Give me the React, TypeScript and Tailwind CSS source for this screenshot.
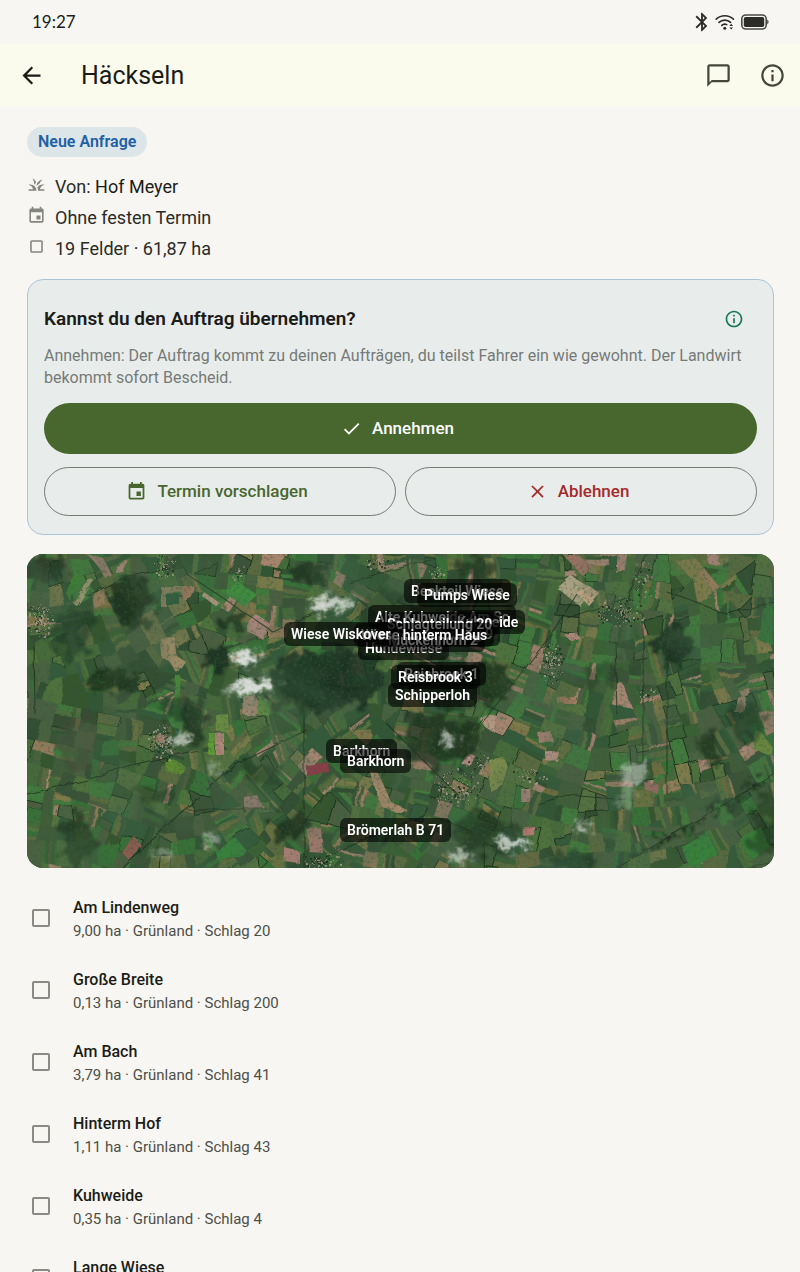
import React, { useId } from 'react';
import {
  MdArrowBack,
  MdBluetooth,
  MdChatBubbleOutline,
  MdCheck,
  MdClose,
  MdCropSquare,
  MdEvent,
  MdInfoOutline,
  MdOutlineGrass,
} from 'react-icons/md';

type Point = [number, number];

const MAP_W = 747;
const MAP_H = 314;

const fields = [
  { name: 'Am Lindenweg', detail: '9,00 ha · Grünland · Schlag 20' },
  { name: 'Große Breite', detail: '0,13 ha · Grünland · Schlag 200' },
  { name: 'Am Bach', detail: '3,79 ha · Grünland · Schlag 41' },
  { name: 'Hinterm Hof', detail: '1,11 ha · Grünland · Schlag 43' },
  { name: 'Kuhweide', detail: '0,35 ha · Grünland · Schlag 4' },
  { name: 'Lange Wiese' },
];

// x / y of the label box on the map, later entries lie on top
const mapLabels = [
  { text: 'Beekteil Wiese', x: 377, y: 25 },
  { text: 'Pumps Wiese', x: 390, y: 29 },
  { text: 'Alte Kuhweide Am Sc', x: 341, y: 51 },
  { text: 'Kuhweide', x: 423, y: 56 },
  { text: 'Schlagteilung 9', x: 362, y: 68 },
  { text: 'Hundewiese', x: 331, y: 82 },
  { text: 'Mückenhorn 2', x: 354, y: 74 },
  { text: 'Schlagteilung 20', x: 353, y: 58 },
  { text: 'Wiese hinterm Haus', x: 327, y: 69 },
  { text: 'Wiese Wiskover', x: 257, y: 68 },
  { text: 'Reisbrook 1', x: 370, y: 108 },
  { text: 'Reisbrook 3', x: 364, y: 111 },
  { text: 'Schipperloh', x: 361, y: 129 },
  { text: 'Barkhorn', x: 299, y: 185 },
  { text: 'Barkhorn', x: 313, y: 195 },
  { text: 'Brömerlah B 71', x: 313, y: 264 },
];

// cx, cy, rx, ry, opacity
const woods = [
  [300, 122, 56, 30, 0.85],
  [270, 138, 30, 16, 0.6],
  [104, 46, 20, 26, 0.75],
  [43, 76, 20, 26, 0.5],
  [191, 102, 16, 9, 0.85],
  [84, 126, 22, 14, 0.8],
  [165, 168, 12, 22, 0.7],
  [14, 12, 22, 14, 0.6],
  [48, 284, 16, 26, 0.65],
  [262, 270, 20, 13, 0.75],
  [282, 16, 20, 14, 0.7],
  [205, 66, 12, 10, 0.8],
  [150, 150, 12, 12, 0.5],
  [130, 240, 22, 10, 0.4],
  [235, 218, 20, 10, 0.4],
  [643, 89, 18, 20, 0.85],
  [432, 128, 54, 25, 0.8],
  [410, 184, 42, 26, 0.75],
  [455, 276, 32, 22, 0.65],
  [446, 14, 18, 13, 0.6],
  [716, 168, 17, 24, 0.5],
  [682, 192, 9, 17, 0.6],
  [380, 60, 50, 30, 0.35],
  [735, 270, 10, 36, 0.45],
  [540, 306, 20, 10, 0.5],
  [575, 118, 16, 11, 0.35],
];

const clouds = [
  [303, 49, 22, 7, 0.8],
  [292, 54, 10, 6, 0.7],
  [218, 103, 14, 7, 0.95],
  [228, 133, 22, 7, 0.95],
  [208, 137, 10, 4, 0.6],
  [153, 186, 11, 6, 0.7],
  [184, 285, 9, 6, 0.45],
  [422, 186, 9, 5, 0.7],
  [606, 219, 12, 10, 0.5],
  [600, 240, 9, 16, 0.25],
  [486, 290, 17, 6, 0.8],
  [432, 303, 12, 6, 0.65],
  [556, 274, 8, 6, 0.6],
  [334, 201, 10, 3, 0.5],
  [186, 214, 5, 8, 0.35],
  [138, 300, 12, 6, 0.3],
];

// cx, cy, rx, ry, number of roofs
const villages = [
  [12, 66, 14, 18, 130],
  [134, 190, 15, 20, 150],
  [137, 11, 12, 12, 70],
  [294, 307, 22, 8, 90],
  [594, 58, 25, 16, 150],
  [617, 24, 10, 22, 50],
  [524, 108, 13, 22, 130],
  [428, 234, 24, 20, 170],
  [452, 210, 14, 12, 50],
  [352, 8, 14, 8, 40],
  [410, 20, 10, 10, 40],
  [210, 18, 8, 10, 30],
  [620, 140, 12, 6, 30],
  [500, 222, 20, 8, 50],
];

const accents: { d: string; fill: string }[] = [
  { d: 'M529 33l14-12 25 15-14 17z', fill: '#a8a080' },
  { d: 'M550 39l12-7 11 8-11 12z', fill: '#d9b08d' },
  { d: 'M280 212l21-3 1 9-22 4z', fill: '#8d3d46' },
  { d: 'M454 166q5-8 16-4l-5 15q-8-3-11-11z', fill: '#b79683' },
  { d: 'M133 84l15-1 1 18 9 6-8 12-8-12-8-4z', fill: '#a38d68' },
  { d: 'M220 71l10-10 15 10-10 14-15-8z', fill: '#a9857a' },
  { d: 'M134 33l32 0 0 5-26 1 0 14-6 0z', fill: '#a58b6b' },
  { d: 'M139 40l14 0 0 11-14 0z', fill: '#2c5a38' },
  { d: 'M155 35l12-4-4 10-7 6z', fill: '#b57f63' },
  { d: 'M177 38l18 13-4 3-16-12z', fill: '#b39a82' },
  { d: 'M195 55l10-13 5 4-8 12z', fill: '#b08c75' },
  { d: 'M237 0l24 0-10 15-18-4z', fill: '#a6836c' },
  { d: 'M60 0l16 4 8 16-6 4q-4-10-18-24z', fill: '#9a7c6e' },
  { d: 'M89 12l12-6-6 11-7 1z', fill: '#ac8578' },
  { d: 'M47 50l16-26 4 3-17 25z', fill: '#a39d75' },
  { d: 'M39 39l8-18 8 3-12 23z', fill: '#3e7e35' },
  { d: 'M189 161l12-1 1 18-12 0z', fill: '#6d8e43' },
  { d: 'M189 180l8-1 0 22-8 0z', fill: '#b18778' },
  { d: 'M182 180l7 0-1 21-7 0z', fill: '#629b34' },
  { d: 'M138 206q12-2 22 9l-5 5-16-3z', fill: '#5d8a33' },
  { d: 'M188 297l20-14 12 14-6 7-24 1z', fill: '#37843a' },
  { d: 'M103 307l-9-10 14-14 7 9z', fill: '#8c5c50' },
  { d: 'M218 244l12-3 8 14-20 1z', fill: '#a78078' },
  { d: 'M280 275l14-1 2 25-14-1z', fill: '#99776b' },
  { d: 'M257 293l16 4 0 13-16-2z', fill: '#a37c71' },
  { d: 'M343 217l9 3 12 28 16 8-8 4-18-8-8-22z', fill: '#a8896a' },
  { d: 'M216 143l12-2 7 12-8 8-10 0z', fill: '#a58a76' },
  { d: 'M232 143l14 5-4 14-12-2z', fill: '#669344' },
  { d: 'M590 0l10 0-2 16-8 4z', fill: '#a37f73' },
  { d: 'M680 0l12 0 1 11-12-2z', fill: '#ab8578' },
  { d: 'M535 0l15 0 16 13-10 9z', fill: '#967264' },
  { d: 'M531 144l18-1 0 7-18 0z', fill: '#a67a60' },
  { d: 'M710 143q12-5 9 8l-4 7-8 0z', fill: '#a38470' },
  { d: 'M536 80l14 0 4 5-10 2z', fill: '#b0887a' },
  { d: 'M518 197l15 2-2 9-13-2z', fill: '#b08d80' },
  { d: 'M511 179l12-2 3 10-14 2z', fill: '#a27f72' },
  { d: 'M434 210l8-11 6 3-4 9z', fill: '#a8857b' },
  { d: 'M616 227l16 3-1 10-14-5z', fill: '#8d6a60' },
  { d: 'M494 234l9 0 1 14-10 0z', fill: '#a78379' },
  { d: 'M495 274l12-2 0 9-11 1z', fill: '#b57872' },
  { d: 'M462 206l14-3 5 10-6 18-12 6z', fill: '#7a8a4b' },
  { d: 'M712 285l22-12 8 20-18 14z', fill: '#377d38' },
  { d: 'M654 292l26-14 12 24-30 10z', fill: '#39823a' },
  { d: 'M735 55l12-3 0 40-16-6z', fill: '#35773a' },
  { d: 'M196 37l14-10 20 14-13 12z', fill: '#418b3f' },
  { d: 'M149 122l5 0-2 30-5 0z', fill: '#48883b' },
  { d: 'M728 176l6 2 12 16-2 8-16-6z', fill: '#6f8d3c' },
];

const roads = [
  'M0 240 L60 226 L100 212 L170 196',
  'M96 314 L150 262 L210 210 L280 176',
  'M60 42 L96 24 L150 12',
  'M160 20 L246 78 L300 52',
  'M277 160 L277 256 L277 314',
  'M158 255 L240 255',
  'M300 304 L340 284 L400 262',
  'M440 188 L520 86 L550 40',
  'M510 250 L540 241 L600 246',
  'M590 314 L660 272 L747 221',
  'M588 86 L590 160',
  'M616 60 L616 220',
  'M640 108 L640 240',
  'M360 170 L430 240',
  'M620 0 L600 44 L540 64',
  'M7 90 L8 160',
  'M320 28 L404 6',
  'M640 38 L700 60 L747 48',
];

const greens = [
  '#36552f', '#3a6034', '#405f38', '#466a3a', '#335634', '#4f713c', '#415c3a', '#387039',
  '#57723f', '#3b5339', '#437a3c', '#314e33', '#5a6b41', '#49623f', '#345a3b', '#4c5f40',
];
const soils = ['#8f7a5a', '#9a7d68', '#7d7548', '#6d6c40', '#a3846f', '#7d7a4c', '#77794a', '#66703f'];

function makeRandom(seed: number) {
  let s = seed;
  return () => {
    s = (s * 1664525 + 1013904223) % 4294967296;
    return s / 4294967296;
  };
}

function polygonArea(poly: Point[]) {
  let sum = 0;
  poly.forEach(([x, y], i) => {
    const [nx, ny] = poly[(i + 1) % poly.length];
    sum += x * ny - nx * y;
  });
  return Math.abs(sum) / 2;
}

// cuts a convex polygon along the line through (px, py) with normal (nx, ny)
function cut(poly: Point[], px: number, py: number, nx: number, ny: number): [Point[], Point[]] {
  const left: Point[] = [];
  const right: Point[] = [];
  poly.forEach((a, i) => {
    const b = poly[(i + 1) % poly.length];
    const da = (a[0] - px) * nx + (a[1] - py) * ny;
    const db = (b[0] - px) * nx + (b[1] - py) * ny;
    (da >= 0 ? left : right).push(a);
    if (da >= 0 !== db >= 0) {
      const t = da / (da - db);
      const p: Point = [a[0] + (b[0] - a[0]) * t, a[1] + (b[1] - a[1]) * t];
      left.push(p);
      right.push(p);
    }
  });
  return [left, right];
}

function longestEdge(poly: Point[]): Point {
  let best: Point = [1, 0];
  let bestLen = 0;
  poly.forEach((a, i) => {
    const b = poly[(i + 1) % poly.length];
    const len = Math.hypot(b[0] - a[0], b[1] - a[1]);
    if (len > bestLen) {
      bestLen = len;
      best = [(b[0] - a[0]) / len, (b[1] - a[1]) / len];
    }
  });
  return best;
}

function buildParcels() {
  const rnd = makeRandom(71);
  const parcels: { points: string; fill: string; edge: boolean }[] = [];

  const pickColour = (x: number) => {
    const soilShare = x > 330 ? 0.17 : 0.1;
    const list = rnd() < soilShare ? soils : greens;
    return list[Math.floor(rnd() * list.length)];
  };

  const split = (poly: Point[]) => {
    if (poly.length < 3) return;
    const area = polygonArea(poly);
    const [ex, ey] = longestEdge(poly);
    const cx = poly.reduce((s, p) => s + p[0], 0) / poly.length;
    const cy = poly.reduce((s, p) => s + p[1], 0) / poly.length;
    if (area < 130 + rnd() * 480) {
      if (rnd() < 0.34) {
        // long narrow strips inside one block
        let rest = poly;
        for (let i = 0; i < 4; i += 1) {
          const proj = rest.map((p) => -p[0] * ey + p[1] * ex);
          const start = Math.min(...proj) + 2 + rnd() * 4;
          const [far, near] = cut(rest, -ey * start, ex * start, -ey, ex);
          if (near.length > 2) parcels.push({ points: near.join(' '), fill: pickColour(cx), edge: false });
          rest = far;
          if (rest.length < 3) break;
        }
        if (rest.length > 2) parcels.push({ points: rest.join(' '), fill: pickColour(cx), edge: false });
        return;
      }
      parcels.push({ points: poly.join(' '), fill: pickColour(cx), edge: rnd() < 0.18 });
      return;
    }
    const turn = (rnd() - 0.5) * (area > 9000 ? 1.1 : 0.3);
    const nx = ex * Math.cos(turn) - ey * Math.sin(turn);
    const ny = ex * Math.sin(turn) + ey * Math.cos(turn);
    const [a, b] = cut(poly, cx + (rnd() - 0.5) * 8, cy + (rnd() - 0.5) * 8, nx, ny);
    split(a);
    split(b);
  };

  split([[-20, -20], [MAP_W + 20, -20], [MAP_W + 20, MAP_H + 20], [-20, MAP_H + 20]]);
  return parcels;
}

function buildRoofs() {
  const rnd = makeRandom(19);
  const tones = ['#9c9a86', '#1d2a1c', '#b0a694', '#7d7a66', '#20301f', '#8e7468'];
  return villages.flatMap(([cx, cy, rx, ry, count]) =>
    Array.from({ length: count }, () => {
      const angle = rnd() * Math.PI * 2;
      const dist = rnd();
      return {
        x: Math.round(cx + Math.cos(angle) * dist * rx),
        y: Math.round(cy + Math.sin(angle) * dist * ry),
        size: rnd() < 0.7 ? 1 : 2,
        fill: tones[Math.floor(rnd() * tones.length)],
      };
    })
  );
}

const parcels = buildParcels();
const roofs = buildRoofs();

const SatelliteMap = () => (
  <svg
    viewBox={`0 0 ${MAP_W} ${MAP_H}`}
    preserveAspectRatio="xMidYMid slice"
    className="block w-full h-full"
    aria-hidden="true"
  >
    <defs>
      <filter id="ground" x="0" y="0" width="100%" height="100%">
        <feTurbulence type="fractalNoise" baseFrequency="0.05" numOctaves="4" seed="4" result="n" />
        <feDisplacementMap in="SourceGraphic" in2="n" scale="5" />
        <feGaussianBlur stdDeviation="0.5" />
      </filter>
      <filter id="wood" x="-20%" y="-20%" width="140%" height="140%">
        <feTurbulence type="fractalNoise" baseFrequency="0.07" numOctaves="4" seed="9" result="n" />
        <feDisplacementMap in="SourceGraphic" in2="n" scale="34" xChannelSelector="R" yChannelSelector="G" />
        <feGaussianBlur stdDeviation="0.8" />
      </filter>
      <filter id="cloud" x="-20%" y="-20%" width="140%" height="140%">
        <feGaussianBlur stdDeviation="2.4" result="b" />
        <feTurbulence type="fractalNoise" baseFrequency="0.09" numOctaves="3" seed="3" result="n" />
        <feDisplacementMap in="b" in2="n" scale="22" xChannelSelector="R" yChannelSelector="G" />
      </filter>
      <filter id="shade" x="0" y="0" width="100%" height="100%">
        <feTurbulence type="fractalNoise" baseFrequency="0.018" numOctaves="5" seed="12" />
        <feColorMatrix values="0 0 0 0 0.06  0 0 0 0 0.13  0 0 0 0 0.07  2.6 0 0 0 -1.1" />
      </filter>
      <filter id="grain" x="0" y="0" width="100%" height="100%">
        <feTurbulence type="fractalNoise" baseFrequency="0.3" numOctaves="3" seed="5" />
        <feColorMatrix values="0 0 0 0 0.04  0 0 0 0 0.1  0 0 0 0 0.05  0 4 0 0 -2.1" />
      </filter>
    </defs>

    <rect width={MAP_W} height={MAP_H} fill="#3a5534" />
    <g filter="url(#ground)">
      {parcels.map((parcel, i) => (
        <polygon
          key={i}
          points={parcel.points}
          fill={parcel.fill}
          stroke={parcel.edge ? '#1c331d' : parcel.fill}
          strokeWidth={parcel.edge ? 1 : 0.4}
        />
      ))}
      {accents.map((accent) => (
        <path key={accent.d} d={accent.d} fill={accent.fill} />
      ))}
      <g fill="none" stroke="#1b2b1b" strokeWidth="1.1" opacity="0.75">
        {roads.map((d) => (
          <path key={d} d={d} />
        ))}
      </g>
    </g>
    <g filter="url(#wood)" fill="#1a2f1d">
      {woods.map(([cx, cy, rx, ry, opacity]) => (
        <ellipse key={`${cx}-${cy}`} cx={cx + 2} cy={cy + 2} rx={rx} ry={ry} opacity={opacity} />
      ))}
      <path d="M600 306 L664 272 L745 224" fill="none" stroke="#1a2a1b" strokeWidth="4" strokeDasharray="7 4" />
    </g>
    <ellipse cx="52" cy="190" rx="18" ry="30" fill="#4a4636" opacity="0.5" filter="url(#wood)" />
    <rect width={MAP_W} height={MAP_H} filter="url(#shade)" opacity="0.5" />
    <rect width={MAP_W} height={MAP_H} filter="url(#grain)" opacity="0.45" />
    {roofs.map((roof, i) => (
      <rect key={i} x={roof.x} y={roof.y} width={roof.size} height={roof.size} fill={roof.fill} opacity="0.7" />
    ))}
    <g filter="url(#cloud)" fill="#dfe3df">
      {clouds.map(([cx, cy, rx, ry, opacity]) => (
        <ellipse key={`${cx}-${cy}`} cx={cx} cy={cy} rx={rx} ry={ry} opacity={opacity} />
      ))}
    </g>
  </svg>
);

const WifiIcon = () => (
  <svg viewBox="0 0 20 18" className="w-5 h-[18px]" fill="none" stroke="#2b2b29" strokeWidth="1.6" strokeLinecap="round">
    <path d="M1.2 6.2a12.4 12.4 0 0 1 17.2 0" />
    <path d="M4 9.4a8.4 8.4 0 0 1 11.6 0" />
    <path d="M6.8 12.4a4.4 4.4 0 0 1 5-0.8" />
    <circle cx="9.8" cy="15.2" r="1.5" fill="#2b2b29" stroke="none" />
    <path d="M14.4 13l1.8-2.2 1.8 2.2zM14.4 14.4l1.8 2.2 1.8-2.2z" fill="#2b2b29" stroke="none" />
  </svg>
);

const BatteryIcon = () => (
  <svg viewBox="0 0 28 16" className="w-7 h-4">
    <rect x="0.8" y="1" width="24.4" height="14" rx="4" fill="none" stroke="#4a4a47" strokeWidth="1.6" />
    <rect x="2.8" y="3" width="20.4" height="10" rx="1.8" fill="#2b2b29" />
    <path d="M26.2 5.6q1.4 1 1.4 2.4t-1.4 2.4z" fill="#4a4a47" />
  </svg>
);

const StatusBar = () => (
  <div className="flex items-center justify-between h-11 pl-8 pr-[31px] shrink-0">
    <span className="font-['Lato',sans-serif] text-[17px] text-[#1c1c1a]">19:27</span>
    <div className="flex items-center gap-1.5 text-[#2b2b29]">
      <div className="flex items-center gap-0.5">
        <MdBluetooth className="w-[22px] h-[22px]" />
        <WifiIcon />
      </div>
      <BatteryIcon />
    </div>
  </div>
);

const TopBar = () => (
  <header className="flex items-center h-[63px] pl-[18px] pr-3.5 bg-[#fafbed] shrink-0">
    <button type="button" aria-label="Zurück" className="text-[#1b1c17]">
      <MdArrowBack className="w-[27px] h-[27px]" />
    </button>
    <h1 className="flex-1 ml-9 text-[25px] leading-8 text-[#1b1c17]">Häckseln</h1>
    <div className="flex items-center gap-[27px] text-[#44483c]">
      <button type="button" aria-label="Nachrichten">
        <MdChatBubbleOutline className="w-[27px] h-[27px]" />
      </button>
      <button type="button" aria-label="Info">
        <MdInfoOutline className="w-[27px] h-[27px]" />
      </button>
    </div>
  </header>
);

const RequestCard = () => (
  <section className="mt-[15px] px-4 pt-4 pb-[18px] bg-[#e8edeb] border border-[#a9c5da] rounded-2xl">
    <div className="flex items-center justify-between h-[46px]">
      <h2 className="text-[19px] font-semibold text-[#1b1c1a]">Kannst du den Auftrag übernehmen?</h2>
      <button type="button" aria-label="Hilfe" className="flex items-center justify-center w-[46px] h-[46px] text-[#17775a]">
        <MdInfoOutline className="w-5 h-5" />
      </button>
    </div>
    <p className="mt-[3px] text-base leading-[22px] text-[#757a78]">
      Annehmen: Der Auftrag kommt zu deinen Aufträgen, du teilst Fahrer ein wie gewohnt. Der Landwirt
      bekommt sofort Bescheid.
    </p>
    <button
      type="button"
      className="flex items-center justify-center gap-2.5 w-full h-[51px] mt-[14px] pr-1.5 rounded-full bg-[#48672e] text-white text-[17px] font-medium"
    >
      <MdCheck className="w-[21px] h-[21px]" />
      Annehmen
    </button>
    <div className="grid grid-cols-2 gap-[9px] mt-[13px]">
      <button
        type="button"
        className="flex items-center justify-center gap-2.5 h-[49px] pr-1.5 rounded-full border border-[#757a72] text-[#48672e] text-[17px] font-medium"
      >
        <MdEvent className="w-[21px] h-[21px]" />
        Termin vorschlagen
      </button>
      <button
        type="button"
        className="flex items-center justify-center gap-2.5 h-[49px] pr-1.5 rounded-full border border-[#757a72] text-[#a52a2a] text-[17px] font-medium"
      >
        <MdClose className="w-[21px] h-[21px]" />
        Ablehnen
      </button>
    </div>
  </section>
);

const FieldMap = () => (
  <div className="relative h-[314px] mt-[19px] rounded-2xl overflow-hidden">
    <SatelliteMap />
    {mapLabels.map((label) => (
      <span
        key={`${label.text}-${label.x}`}
        className="absolute px-[7px] h-6 leading-6 rounded-md bg-black/60 text-white text-sm font-semibold whitespace-nowrap"
        style={{ left: `${(label.x / MAP_W) * 100}%`, top: label.y }}
      >
        {label.text}
      </span>
    ))}
  </div>
);

const FieldRow = ({ name, detail }: { name: string; detail?: string }) => {
  const id = useId();
  return (
    <li className="flex h-[72px] pl-[5px]">
      <input
        id={id}
        type="checkbox"
        className="appearance-none w-[18px] h-[18px] mt-[27px] shrink-0 border-2 border-[#8a8a85] rounded-xs checked:bg-[#48672e]"
      />
      <label htmlFor={id} className="flex-1 ml-[23px] pt-[14px] leading-[23px]">
        <span className="block text-base font-medium text-[#1b1c17]">{name}</span>
        {detail && <span className="block text-[15px] text-[#4d4f48]">{detail}</span>}
      </label>
    </li>
  );
};

export default function App() {
  return (
    <div className="flex flex-col h-screen bg-[#f7f6f2] font-['Roboto',sans-serif]">
      <StatusBar />
      <TopBar />
      <main className="flex-1 min-h-0 overflow-y-auto pl-[27px] pr-[26px] pt-5 [scrollbar-width:none]">
        <span className="flex items-center w-fit h-[30px] px-[11px] rounded-full bg-[#dce5e8] text-[#1f5fa6] text-base font-semibold">
          Neue Anfrage
        </span>
        <ul className="mt-[14px] text-lg leading-[31px] text-[#2a2b27]">
          <li className="flex items-start gap-[9px]">
            <MdOutlineGrass className="w-[19px] h-[19px] mt-1 text-[#85857f]" />
            <span>
              Von: <span className="text-[#1b1c17]">Hof Meyer</span>
            </span>
          </li>
          <li className="flex items-start gap-[9px]">
            <MdEvent className="w-[19px] h-[19px] mt-1 text-[#85857f]" />
            Ohne festen Termin
          </li>
          <li className="flex items-start gap-[9px]">
            <MdCropSquare className="w-[19px] h-[19px] mt-1 text-[#85857f]" />
            19 Felder · 61,87 ha
          </li>
        </ul>
        <RequestCard />
        <FieldMap />
        <ul className="mt-[14px]">
          {fields.map((field) => (
            <FieldRow key={field.name} {...field} />
          ))}
        </ul>
      </main>
    </div>
  );
}
